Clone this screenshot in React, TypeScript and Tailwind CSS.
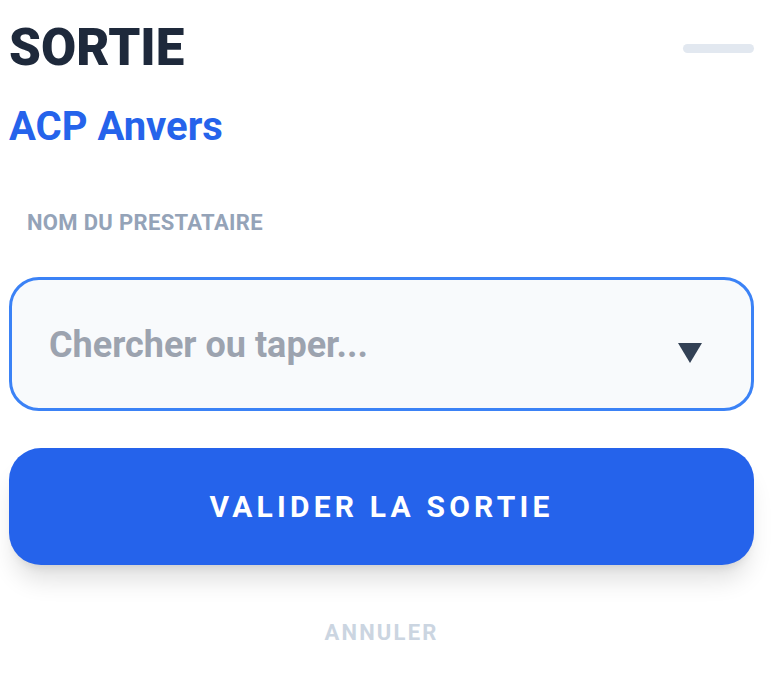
import { useState } from 'react'

export default function App() {
  const [value, setValue] = useState('')

  return (
    <div className="min-h-screen bg-white font-['Roboto',sans-serif]">
      <div className="w-[745px] ml-[9px] pt-[22px]">
        {/* Header */}
        <div className="flex items-start justify-between">
          <h1 className="text-[51px] leading-none font-black text-[#1e293b]">SORTIE</h1>
          <div className="mt-[22px] w-[71px] h-[9px] rounded-full bg-[#e2e8f0]" />
        </div>
        <div className="mt-[34px] text-[40px] leading-none font-bold text-[#2563eb]">ACP Anvers</div>

        {/* Field */}
        <label className="block mt-[65px] pl-[18px] text-[22px] leading-none font-bold uppercase tracking-[0.015em] text-[#94a3b8]">
          Nom du prestataire
        </label>
        <div className="mt-[43px] relative h-[134px] rounded-[30px] border-[3px] border-[#3b82f6] bg-[#f8fafc] flex items-center">
          <input
            value={value}
            onChange={(e) => setValue(e.target.value)}
            placeholder="Chercher ou taper..."
            className="w-full h-full bg-transparent pl-[37px] pr-[80px] pt-[2px] text-[36px] font-bold text-[#334155] placeholder:text-[#9ca3af] outline-none"
          />
          <span className="absolute right-[49px] top-[63px] w-0 h-0 border-l-[12px] border-r-[12px] border-t-[20px] border-l-transparent border-r-transparent border-t-[#334155]" />
        </div>

        {/* Actions */}
        <button className="mt-[37px] w-full h-[117px] rounded-[32px] bg-[#2563eb] text-white text-[30px] font-bold tracking-[0.14em] shadow-[0_20px_25px_-5px_rgba(0,0,0,0.12),0_8px_10px_-6px_rgba(0,0,0,0.1)]">
          VALIDER LA SORTIE
        </button>
        <div className="mt-[57px] text-center text-[22px] leading-none font-bold tracking-[0.1em] text-[#cbd5e1]">
          ANNULER
        </div>
      </div>
    </div>
  )
}
